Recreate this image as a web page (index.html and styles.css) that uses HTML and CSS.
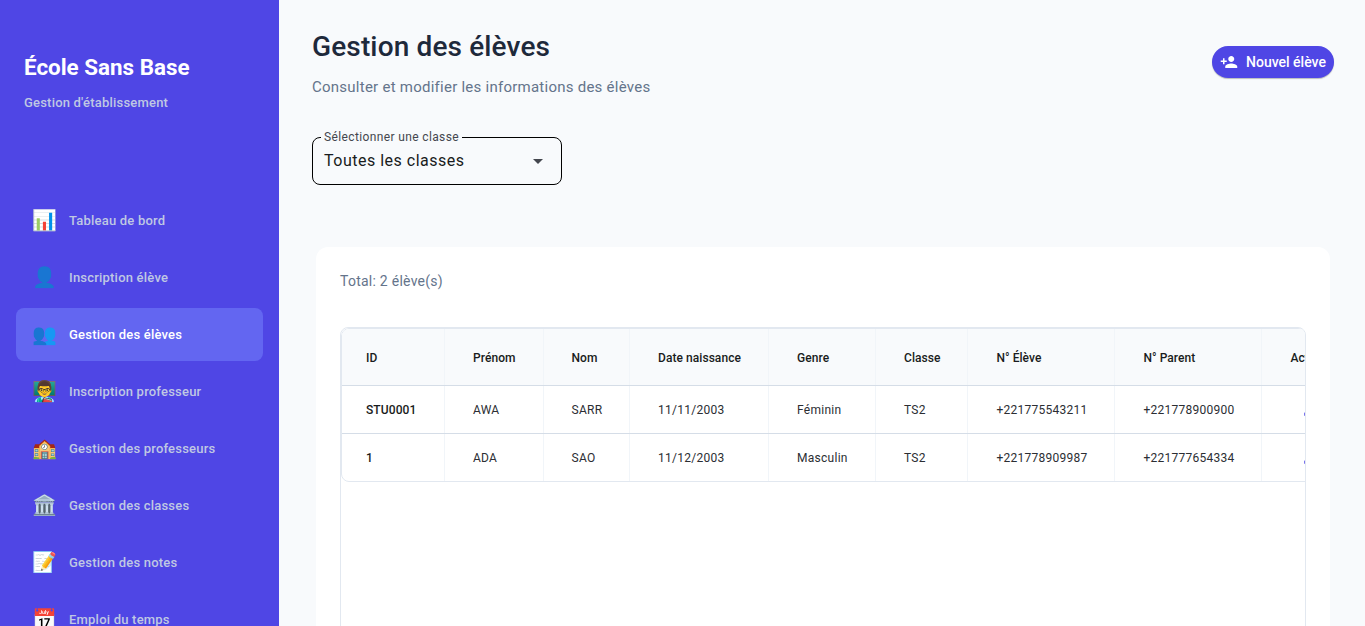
FILE: index.html
```html
<!DOCTYPE html>
<html lang="fr">
<head>
<meta charset="utf-8">
<title>Gestion des élèves</title>
<link rel="stylesheet" href="styles.css">
</head>
<body>
<div class="app">
  <aside class="sidebar">
    <div class="brand">
      <div class="brand-name">École Sans Base</div>
      <div class="brand-sub">Gestion d'établissement</div>
    </div>
    <nav class="nav">
      <a class="nav-item"><span class="nav-icon">📊</span><span>Tableau de bord</span></a>
      <a class="nav-item"><span class="nav-icon">👤</span><span>Inscription élève</span></a>
      <a class="nav-item active"><span class="nav-icon">👥</span><span>Gestion des élèves</span></a>
      <a class="nav-item"><span class="nav-icon">👨‍🏫</span><span>Inscription professeur</span></a>
      <a class="nav-item"><span class="nav-icon">🏫</span><span>Gestion des professeurs</span></a>
      <a class="nav-item"><span class="nav-icon">🏛️</span><span>Gestion des classes</span></a>
      <a class="nav-item"><span class="nav-icon">📝</span><span>Gestion des notes</span></a>
      <a class="nav-item"><span class="nav-icon">📅</span><span>Emploi du temps</span></a>
    </nav>
  </aside>
  <main class="main">
    <header class="header">
      <div>
        <h1 class="title">Gestion des élèves</h1>
        <p class="subtitle">Consulter et modifier les informations des élèves</p>
      </div>
      <button class="add-button">
        <svg class="add-icon" viewBox="0 0 24 24"><path d="M15 12c2.21 0 4-1.79 4-4s-1.79-4-4-4-4 1.79-4 4 1.79 4 4 4zm-9-2V7H4v3H1v2h3v3h2v-3h3v-2H6zm9 4c-2.67 0-8 1.34-8 4v2h16v-2c0-2.66-5.33-4-8-4z"/></svg>
        <span>Nouvel élève</span>
      </button>
    </header>
    <fieldset class="select">
      <legend class="select-label">Sélectionner une classe</legend>
      <div class="select-row">
        <span>Toutes les classes</span>
        <svg class="select-arrow" viewBox="0 0 24 24"><path d="M7 10l5 5 5-5z"/></svg>
      </div>
    </fieldset>
    <section class="card">
      <p class="total">Total: 2 élève(s)</p>
      <div class="table-frame">
        <div class="table">
          <div class="row head"><span>ID</span><span>Prénom</span><span>Nom</span><span>Date naissance</span><span>Genre</span><span>Classe</span><span>N° Élève</span><span>N° Parent</span><span>Actions</span></div>
          <div class="row"><span class="id">STU0001</span><span>AWA</span><span>SARR</span><span>11/11/2003</span><span>Féminin</span><span>TS2</span><span>+221775543211</span><span>+221778900900</span><span><svg class="edit" viewBox="0 0 24 24"><path d="M3 17.25V21h3.75L17.81 9.94l-3.75-3.75L3 17.25zM20.71 7.04a1 1 0 0 0 0-1.41l-2.34-2.34a1 1 0 0 0-1.41 0l-1.83 1.83 3.75 3.75 1.83-1.83z"/></svg></span></div>
          <div class="row"><span class="id">1</span><span>ADA</span><span>SAO</span><span>11/12/2003</span><span>Masculin</span><span>TS2</span><span>+221778909987</span><span>+221777654334</span><span><svg class="edit" viewBox="0 0 24 24"><path d="M3 17.25V21h3.75L17.81 9.94l-3.75-3.75L3 17.25zM20.71 7.04a1 1 0 0 0 0-1.41l-2.34-2.34a1 1 0 0 0-1.41 0l-1.83 1.83 3.75 3.75 1.83-1.83z"/></svg></span></div>
        </div>
      </div>
    </section>
  </main>
</div>
</body>
</html>
```
FILE: styles.css
```css
* { box-sizing: border-box; }
body { margin: 0; overflow: hidden; font-family: Roboto, "Noto Color Emoji", sans-serif; color: #191c20; }
.app { display: flex; height: 626px; overflow: hidden; background: #f8fafc; }
.sidebar { flex: 0 0 279px; background: #4f46e5; overflow: hidden; }
.brand { padding: 52px 24px 0; height: 194px; }
.brand-name { font-size: 22.4px; line-height: 30px; font-weight: 700; color: #fff; }
.brand-sub { margin-top: 12px; font-size: 13px; line-height: 18px; font-weight: 500; letter-spacing: .2px; color: #bfc8e3; }
.nav { display: flex; flex-direction: column; gap: 4px; padding: 0 16px; }
.nav-item { display: flex; flex: none; align-items: center; gap: 12px; height: 53px; padding: 0 16px; border-radius: 8px; font-size: 13px; font-weight: 500; letter-spacing: .21px; color: #bfc8e3; white-space: nowrap; }
.nav-item.active { background: #6366f1; color: #fff; }
.nav-icon { width: 25px; padding-bottom: 2px; font-size: 20px; line-height: 24px; letter-spacing: 0; }
.main { flex: 1; min-width: 0; padding: 27px 31px 0 33px; }
.header { display: flex; justify-content: space-between; height: 110px; }
.title { margin: 0; font-size: 28px; line-height: 40px; font-weight: 500; letter-spacing: .14px; color: #1e293b; }
.subtitle { margin: 10px 0 0; font-size: 15px; line-height: 20px; letter-spacing: .25px; color: #64748b; }
.add-button { display: flex; align-items: center; gap: 8px; width: 122px; height: 32px; margin-top: 18.5px; padding: 0 8px; border: 0; border-radius: 16px; background: #4f46e5; color: #fff; font: 500 14px Roboto, sans-serif; white-space: nowrap; box-shadow: 0 1px 1px rgba(0,0,0,.25); }
.add-icon { flex: none; width: 18px; height: 18px; fill: #fff; }
.select { width: 250px; height: 55px; margin: -7px 0 0; padding: 0 11px; border: 1px solid #000; border-radius: 8px; }
.select-label { margin-left: -3.5px; padding: 0 3.5px; font-size: 12px; line-height: 14px; letter-spacing: .37px; color: #44474e; }
.select-row { display: flex; justify-content: space-between; align-items: center; height: 34px; font-size: 16px; letter-spacing: .5px; }
.select-row span { padding-bottom: 2px; }
.select-arrow { width: 24px; height: 24px; fill: #44474e; }
.card { width: 1014px; height: 500px; margin: 62px 0 0 4px; padding: 24px; border-radius: 12px; background: #fff; }
.total { margin: 0; font-size: 14px; line-height: 20px; letter-spacing: .25px; color: #64748b; }
.table-frame { width: 966px; height: 400px; margin-top: 36px; border: 1px solid #e2e8f0; border-radius: 8px; overflow: hidden; }
.table { width: 1100px; border: 1px solid #e2e8f0; border-radius: 8px; overflow: hidden; }
.row { display: grid; grid-template-columns: 103px 98.5px 86.5px 139px 107px 92.4px 147px 147px 1fr; height: 48px; border-bottom: 1px solid #d5dde7; font-size: 12px; letter-spacing: .27px; color: #2b2e33; }
.row:last-child { height: 47px; border-bottom: 0; }
.row.head { height: 57px; background: #f8fafc; font-weight: 500; letter-spacing: .06px; color: #191c20; }
.row > span { display: flex; align-items: center; padding-left: 28px; border-right: 1px solid #f1f5f9; white-space: nowrap; }
.row.head > span { padding-top: 2px; }
.row > span:first-child { padding-left: 24px; }
.row > .id { font-weight: 500; color: #191c20; letter-spacing: .1px; }
.edit { flex: none; width: 18px; height: 18px; margin: 0 0 2px 12px; fill: #4f46e5; }
```
